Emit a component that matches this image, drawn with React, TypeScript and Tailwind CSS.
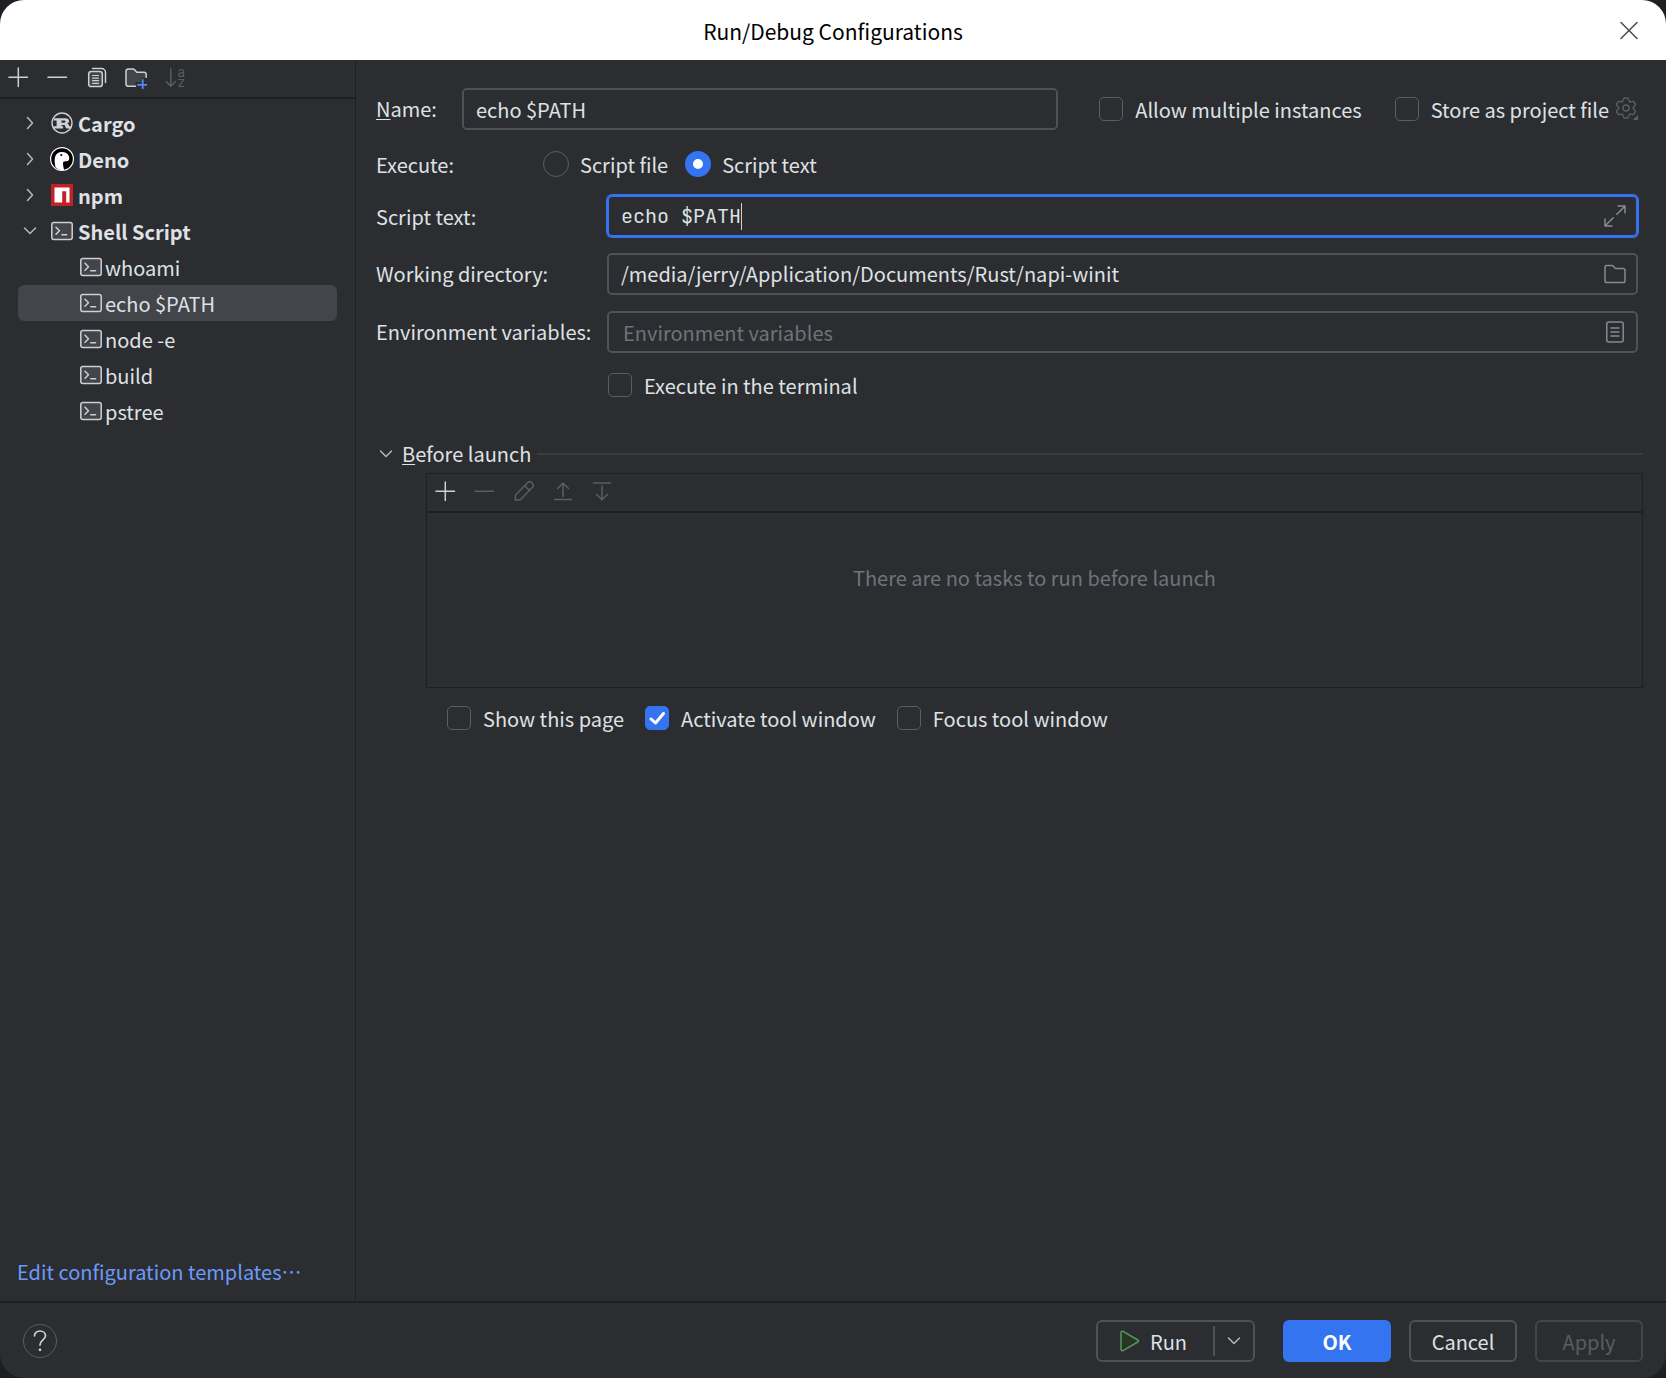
import React, { useState } from 'react';
import type { ReactNode } from 'react';

type IconProps = { children: ReactNode; className?: string };

function Icon({ children, className = '' }: IconProps) {
  return (
    <svg
      viewBox="0 0 24 24"
      width="24"
      height="24"
      fill="none"
      stroke="currentColor"
      strokeWidth="1.5"
      strokeLinecap="round"
      strokeLinejoin="round"
      aria-hidden="true"
      className={`block shrink-0 ${className}`}
    >
      {children}
    </svg>
  );
}

const PlusIcon = () => (
  <Icon>
    <path d="M12.3 3v18.5M3 12.3h18.5" />
  </Icon>
);

const MinusIcon = () => (
  <Icon>
    <path d="M3 12.3h18.5" />
  </Icon>
);

const CopyIcon = () => (
  <Icon>
    <path d="M8.5 3.6h9a4 4 0 0 1 4 4v9.8" />
    <rect x="4.7" y="6.6" width="13.6" height="15" rx="2.6" fill="#43454a" />
    <path d="M8.5 10.5h6M8.5 13.1h6M8.5 15.7h6M8.5 18.3h6" strokeWidth="1.2" />
  </Icon>
);

const NewFolderIcon = () => (
  <Icon>
    <path
      d="M12.5 21.3H5.400a2.400 2.400 0 0 1-2.400-2.400V6.400A2.400 2.400 0 0 1 5.400 4h4.600c.6 0 1.200.3 1.600.7l2.200 2.600h7.200A2.200 2.200 0 0 1 23.200 9.500v3.500h-5v4h-5.700z"
      fill="#43454a"
      stroke="none"
    />
    <path d="M12.500 21.300H5.200a2.200 2.200 0 0 1-2.200-2.200V6.200A2.200 2.200 0 0 1 5.200 4h4.800c.6 0 1.200.3 1.600.7l2.200 2.600h7.200a2.200 2.200 0 0 1 2.200 2.200v2.800" />
    <path d="M19.700 15v9.500M14.900 19.800h9.600" stroke="#548af7" strokeWidth="1.800" />
  </Icon>
);

const SortIcon = () => (
  <Icon>
    <path d="M8.800 4v17M4.200 16.600l4.600 4.700 4.600-4.700" />
    <text x="15.500" fill="currentColor" stroke="none" fontFamily="Inter, sans-serif" fontSize="13.500">
      <tspan x="15.500" y="12">a</tspan>
      <tspan x="15.500" y="22">z</tspan>
    </text>
  </Icon>
);

const PencilIcon = () => (
  <Icon>
    <path d="M4.400 20.900v-4.700L17 3.300a2.300 2.300 0 0 1 3.200 0l1.500 1.500a2.300 2.300 0 0 1 0 3.200L9.100 20.900zM13.700 6.700l4.700 4.700" />
  </Icon>
);

const MoveUpIcon = () => (
  <Icon>
    <path d="M4.500 20.500h17M13 17.500V4.300M7.500 9.500L13 4l5.500 5.500" />
  </Icon>
);

const MoveDownIcon = () => (
  <Icon>
    <path d="M4.500 4h17M13 7v13.500M7.500 15.300L13 20.800l5.500-5.500" />
  </Icon>
);

const ChevronRight = () => (
  <Icon className="text-[#b4b8bf]">
    <path d="M9.500 6.500l5 5.500-5 5.500" />
  </Icon>
);

const ChevronDown = () => (
  <Icon className="text-[#b4b8bf]">
    <path d="M6.500 9l5.500 5.500L17.500 9" />
  </Icon>
);

const CargoIcon = () => (
  <Icon className="text-[#ced0d6]">
    <circle cx="12" cy="12" r="10" strokeWidth="1.400" />
    <path
      d="M4.500 7.200h10.700c2.500 0 3.900 1.100 3.900 2.900 0 1.300-.8 2.100-2 2.500 1.200.3 1.600 1.100 1.800 2 .1.500.4.700.9.700h1.400v2.200h-3.900c-1.700 0-1.900-1.400-2.100-2.400-.1-.8-.6-1.100-1.500-1.100h-2.200v1.300h1.600v2.200H3.300v-2.200h3.300V9.500H3.300zM11.500 9.500v2.200h2.800c.8 0 1.200-.4 1.200-1.100s-.4-1.100-1.200-1.100z"
      fill="currentColor"
      fillRule="evenodd"
      stroke="none"
    />
  </Icon>
);

const DenoIcon = () => (
  <Icon>
    <circle cx="12" cy="12" r="11.400" fill="#000" stroke="#fff" strokeWidth="1.200" />
    <path
      d="M5.400 19.900c-.7-3-1.200-7.200-.2-10.300C6.200 6.600 8.600 5 11.700 5c3.700 0 6.200 1.300 7.200 4.300.6 1.900.4 4.200-1 4.700-1.700.5-3.900-.1-4.600.9-.8 1.300.3 5.600.9 8-3.500.6-6.700-.6-8.800-3z"
      fill="#fff"
      stroke="none"
    />
    <circle cx="11.300" cy="8" r="1.100" fill="#000" stroke="none" />
  </Icon>
);

const NpmIcon = () => (
  <Icon>
    <rect x="1" y="1" width="22" height="22" fill="#c12127" stroke="none" />
    <path d="M4.500 4.500h15v15h-3.300V8.200h-4v11.300H4.500z" fill="#fff" stroke="none" />
  </Icon>
);

const ShellIcon = () => (
  <Icon className="text-[#ced0d6]">
    <rect x="1.800" y="3.500" width="20.400" height="17" rx="2" fill="#43454a" />
    <path d="M6 8.200l3.500 3.500L6 15.200M11.800 15.700h4.800" />
  </Icon>
);

const gearTeeth = [0, 60, 120, 180, 240, 300];

const GearIcon = () => (
  <Icon className="text-[#5a5d63]">
    {gearTeeth.map((angle) => (
      <path
        key={angle}
        transform={`translate(12 11) rotate(${angle})`}
        d="M-3.650-6.300C-2.800-6.800-2.700-8-2.300-9.200Q-2-10-1-10H1Q2-10 2.300-9.200C2.700-8 2.800-6.800 3.650-6.300"
      />
    ))}
    <circle cx="12" cy="11" r="3" />
    <path d="M24 17.700V23h-5.300z" fill="currentColor" stroke="none" />
  </Icon>
);

const ExpandIcon = () => (
  <Icon>
    <path d="M13.800 10.200l8-8M15 2h7v7M10.200 13.800l-8 8M2 15v7h7" />
  </Icon>
);

const FolderIcon = () => (
  <Icon>
    <path d="M2 5.300A1.800 1.800 0 0 1 3.800 3.500h5c.5 0 1 .2 1.300.5l2.400 2.600h7.700A1.800 1.800 0 0 1 22 8.400v10.300a1.800 1.800 0 0 1-1.800 1.800H3.800A1.800 1.800 0 0 1 2 18.700z" />
  </Icon>
);

const ListIcon = () => (
  <Icon>
    <rect x="3.800" y="2" width="16.400" height="20" rx="2" />
    <path d="M8 8h8M8 12h8M8 16h8" />
  </Icon>
);

const PlayIcon = () => (
  <Icon className="text-[#57965c]">
    <path d="M4 3.500c0-1.100 1.100-1.600 2-1.100l14.800 8.600c.9.500.9 1.500 0 2L6 21.600c-.9.500-2 0-2-1.100z" fill="#253627" />
  </Icon>
);

function IconButton({ label, disabled, children }: { label: string; disabled?: boolean; children: ReactNode }) {
  return (
    <button type="button" aria-label={label} disabled={disabled} className="text-[#ced0d6] disabled:text-[#5a5d63]">
      {children}
    </button>
  );
}

function Checkbox({ label, defaultChecked }: { label: string; defaultChecked?: boolean }) {
  return (
    <label className="flex items-center gap-3 whitespace-nowrap">
      <span className="relative block size-6">
        <input
          type="checkbox"
          defaultChecked={defaultChecked}
          className="peer block size-6 appearance-none rounded-[5px] border border-[#5a5d63] checked:border-[#3574f0] checked:bg-[#3574f0]"
        />
        <svg
          viewBox="0 0 24 24"
          fill="none"
          stroke="#fff"
          strokeWidth="3"
          strokeLinecap="round"
          strokeLinejoin="round"
          aria-hidden="true"
          className="pointer-events-none absolute inset-0 hidden size-6 peer-checked:block"
        >
          <path d="M6 13l4.500 4L18.500 7.500" />
        </svg>
      </span>
      <span className="pt-0.5">{label}</span>
    </label>
  );
}

function Radio({ label, defaultChecked }: { label: string; defaultChecked?: boolean }) {
  return (
    <label className="flex items-center gap-[11px] whitespace-nowrap">
      <input
        type="radio"
        name="execute"
        defaultChecked={defaultChecked}
        className="block size-[26px] appearance-none rounded-full border border-[#5a5d63] checked:border-[8px] checked:border-[#3574f0] checked:bg-white"
      />
      <span className="pt-0.5">{label}</span>
    </label>
  );
}

const groups = [
  { name: 'Cargo', icon: <CargoIcon />, items: [] },
  { name: 'Deno', icon: <DenoIcon />, items: [] },
  { name: 'npm', icon: <NpmIcon />, items: [] },
  { name: 'Shell Script', icon: <ShellIcon />, items: ['whoami', 'echo $PATH', 'node -e', 'build', 'pstree'] },
];

function Sidebar() {
  const [selected, setSelected] = useState('echo $PATH');
  return (
    <aside className="flex w-[356px] shrink-0 flex-col border-r border-[#1e1f22]">
      <div className="flex gap-[15px] border-b-2 border-[#1e1f22] pt-[5px] pb-2 pl-1.5">
        <IconButton label="Add"><PlusIcon /></IconButton>
        <IconButton label="Remove"><MinusIcon /></IconButton>
        <IconButton label="Copy"><CopyIcon /></IconButton>
        <IconButton label="New folder"><NewFolderIcon /></IconButton>
        <IconButton label="Sort" disabled><SortIcon /></IconButton>
      </div>
      <ul className="flex-1 px-[18px] pt-1.5">
        {groups.map((group) => (
          <li key={group.name}>
            <button type="button" className="flex h-9 w-full items-center font-bold">
              {group.items.length ? <ChevronDown /> : <ChevronRight />}
              <span className="mr-1 ml-2">{group.icon}</span>
              <span className="pt-0.5">{group.name}</span>
            </button>
            {group.items.length > 0 && (
              <ul>
                {group.items.map((item) => (
                  <li key={item}>
                    <button
                      type="button"
                      onClick={() => setSelected(item)}
                      className={`flex h-9 w-full items-center gap-0.5 rounded-md pl-[61px] ${item === selected ? 'bg-[#43454a]' : ''}`}
                    >
                      <ShellIcon />
                      <span className="pt-0.5">{item}</span>
                    </button>
                  </li>
                ))}
              </ul>
            )}
          </li>
        ))}
      </ul>
      <a href="#templates" lang="zh-CN" className="px-[17px] pb-3.5 text-[#6b9bfa]">
        Edit configuration templates…
      </a>
    </aside>
  );
}

function Editor() {
  return (
    <main className="flex min-w-0 flex-1 flex-col pt-7 pr-[23px] pl-5">
      <div className="flex items-center pr-[5px]">
        <label htmlFor="name" className="w-[86px] shrink-0">
          <span className="underline decoration-1 underline-offset-2">N</span>ame:
        </label>
        <input
          id="name"
          defaultValue="echo $PATH"
          className="h-[42px] min-w-0 flex-1 rounded-[5px] border-2 border-[#4e5157] bg-transparent px-3 outline-none focus:border-[#3574f0]"
        />
        <div className="ml-[41px] flex items-center gap-[33px]">
          <Checkbox label="Allow multiple instances" />
          <div className="flex items-center gap-[5px]">
            <Checkbox label="Store as project file" />
            <button type="button" aria-label="Storage options"><GearIcon /></button>
          </div>
        </div>
      </div>

      <div role="radiogroup" aria-labelledby="execute" className="mt-[21px] flex h-[26px] items-center">
        <span id="execute" className="w-[167px] pt-0.5">Execute:</span>
        <div className="flex gap-[17px]">
          <Radio label="Script file" />
          <Radio label="Script text" defaultChecked />
        </div>
      </div>

      <div className="mt-[18px] grid grid-cols-[231px_1fr] items-center gap-y-4 pr-[5px]">
        <label htmlFor="script" className="pt-0.5">Script text:</label>
        <div className="flex h-[42px] items-center rounded-[5px] border-2 border-[#3574f0] pr-[9px] pl-3 ring-1 ring-[#3574f0]">
          <input
            id="script"
            defaultValue="echo $PATH"
            className="field-sizing-content bg-transparent font-['JetBrains_Mono','DejaVu_Sans_Mono',monospace] text-[20px] caret-transparent outline-none"
          />
          <span className="h-[27px] w-px bg-[#ced0d6]" />
          <button type="button" aria-label="Expand" className="ml-auto text-[#868a91]"><ExpandIcon /></button>
        </div>

        <label htmlFor="directory">Working directory:</label>
        <div className="flex h-[42px] items-center rounded-[5px] border-2 border-[#4e5157] pr-[9px] pl-3">
          <input
            id="directory"
            defaultValue="/media/jerry/Application/Documents/Rust/napi-winit"
            className="min-w-0 flex-1 bg-transparent outline-none"
          />
          <button type="button" aria-label="Browse" className="text-[#868a91]"><FolderIcon /></button>
        </div>

        <label htmlFor="environment">Environment variables:</label>
        <div className="flex h-[42px] items-center rounded-[5px] border-2 border-[#4e5157] pr-[9px] pl-3.5">
          <input
            id="environment"
            placeholder="Environment variables"
            className="min-w-0 flex-1 bg-transparent pt-0.5 outline-none placeholder:text-[#6f737a]"
          />
          <button type="button" aria-label="Edit variables" className="text-[#868a91]"><ListIcon /></button>
        </div>

        <div className="col-start-2 pl-px">
          <Checkbox label="Execute in the terminal" />
        </div>
      </div>

      <section className="mt-[38px]">
        <div className="flex items-center gap-1.5">
          <button type="button" aria-expanded="true" className="flex items-center gap-1">
            <span className="-ml-0.5"><ChevronDown /></span>
            <span>
              <span className="underline decoration-1 underline-offset-2">B</span>efore launch
            </span>
          </button>
          <hr className="flex-1 border-t-2 border-[#393b40]" />
        </div>
        <div className="mt-1 ml-[50px] border border-[#1e1f22]">
          <div className="flex gap-[15px] border-b-2 border-[#1e1f22] pt-[5px] pb-2 pl-1.5">
            <IconButton label="Add task"><PlusIcon /></IconButton>
            <IconButton label="Remove task" disabled><MinusIcon /></IconButton>
            <IconButton label="Edit task" disabled><PencilIcon /></IconButton>
            <IconButton label="Move up" disabled><MoveUpIcon /></IconButton>
            <IconButton label="Move down" disabled><MoveDownIcon /></IconButton>
          </div>
          <p className="h-[174px] pt-[50px] text-center text-[#6f737a]">There are no tasks to run before launch</p>
        </div>
        <div className="mt-3.5 ml-[71px] flex gap-[21px]">
          <Checkbox label="Show this page" />
          <Checkbox label="Activate tool window" defaultChecked />
          <Checkbox label="Focus tool window" />
        </div>
      </section>
    </main>
  );
}

function Footer() {
  return (
    <footer className="flex items-center border-t-2 border-[#1e1f22] px-[23px] pt-[17px] pb-4">
      <button
        type="button"
        aria-label="Help"
        className="flex size-[34px] items-center justify-center rounded-full border border-[#5a5d63] text-[#ced0d6]"
      >
        <svg viewBox="0 0 24 24" width="24" height="24" fill="none" stroke="currentColor" strokeWidth="1.700" strokeLinecap="round" aria-hidden="true">
          <path d="M6.500 6.800C6.500 3.900 8.800 2 12 2s5.500 1.900 5.500 4.700c0 4-5.500 4.700-5.500 9.300" />
          <circle cx="12" cy="20.800" r="1.400" fill="currentColor" stroke="none" />
        </svg>
      </button>
      <div className="ml-auto flex h-[42px] w-[159px] items-stretch rounded-md border-2 border-[#4e5157]">
        <button type="button" className="flex flex-1 items-center gap-[9px] pl-[19px]">
          <PlayIcon />
          <span className="pt-0.5">Run</span>
        </button>
        <span className="my-1 w-0.5 bg-[#4e5157]" />
        <button type="button" aria-label="More run options" className="flex w-[38px] items-center justify-center">
          <ChevronDown />
        </button>
      </div>
      <button type="button" className="ml-7 h-[42px] w-[108px] rounded-md bg-[#3574f0] pt-0.5 font-bold text-white">OK</button>
      <button type="button" className="ml-[18px] h-[42px] w-[108px] rounded-md border-2 border-[#4e5157] pt-0.5">Cancel</button>
      <button type="button" disabled className="ml-[18px] h-[42px] w-[108px] rounded-md border-2 border-[#43454a] pt-0.5 text-[#5a5d63]">
        Apply
      </button>
    </footer>
  );
}

export default function App() {
  return (
    <div className="bg-[#1e1f22] font-['Noto_Sans_CJK_SC',sans-serif] text-[20px] leading-[30px] text-[#dfe1e5]">
      <div className="flex min-h-screen flex-col overflow-hidden rounded-3xl bg-[#2b2d30]">
        <header className="grid h-[60px] grid-cols-[1fr_auto_1fr] items-center bg-white px-[25px] text-black">
          <h1 className="col-start-2 pt-0.5 text-[21px]">Run/Debug Configurations</h1>
          <button type="button" aria-label="Close" className="justify-self-end text-[#4b4b4b]">
            <Icon>
              <path d="M4 4.500l16 16M20 4.500L4 20.500" />
            </Icon>
          </button>
        </header>
        <div className="flex flex-1">
          <Sidebar />
          <Editor />
        </div>
        <Footer />
      </div>
    </div>
  );
}
